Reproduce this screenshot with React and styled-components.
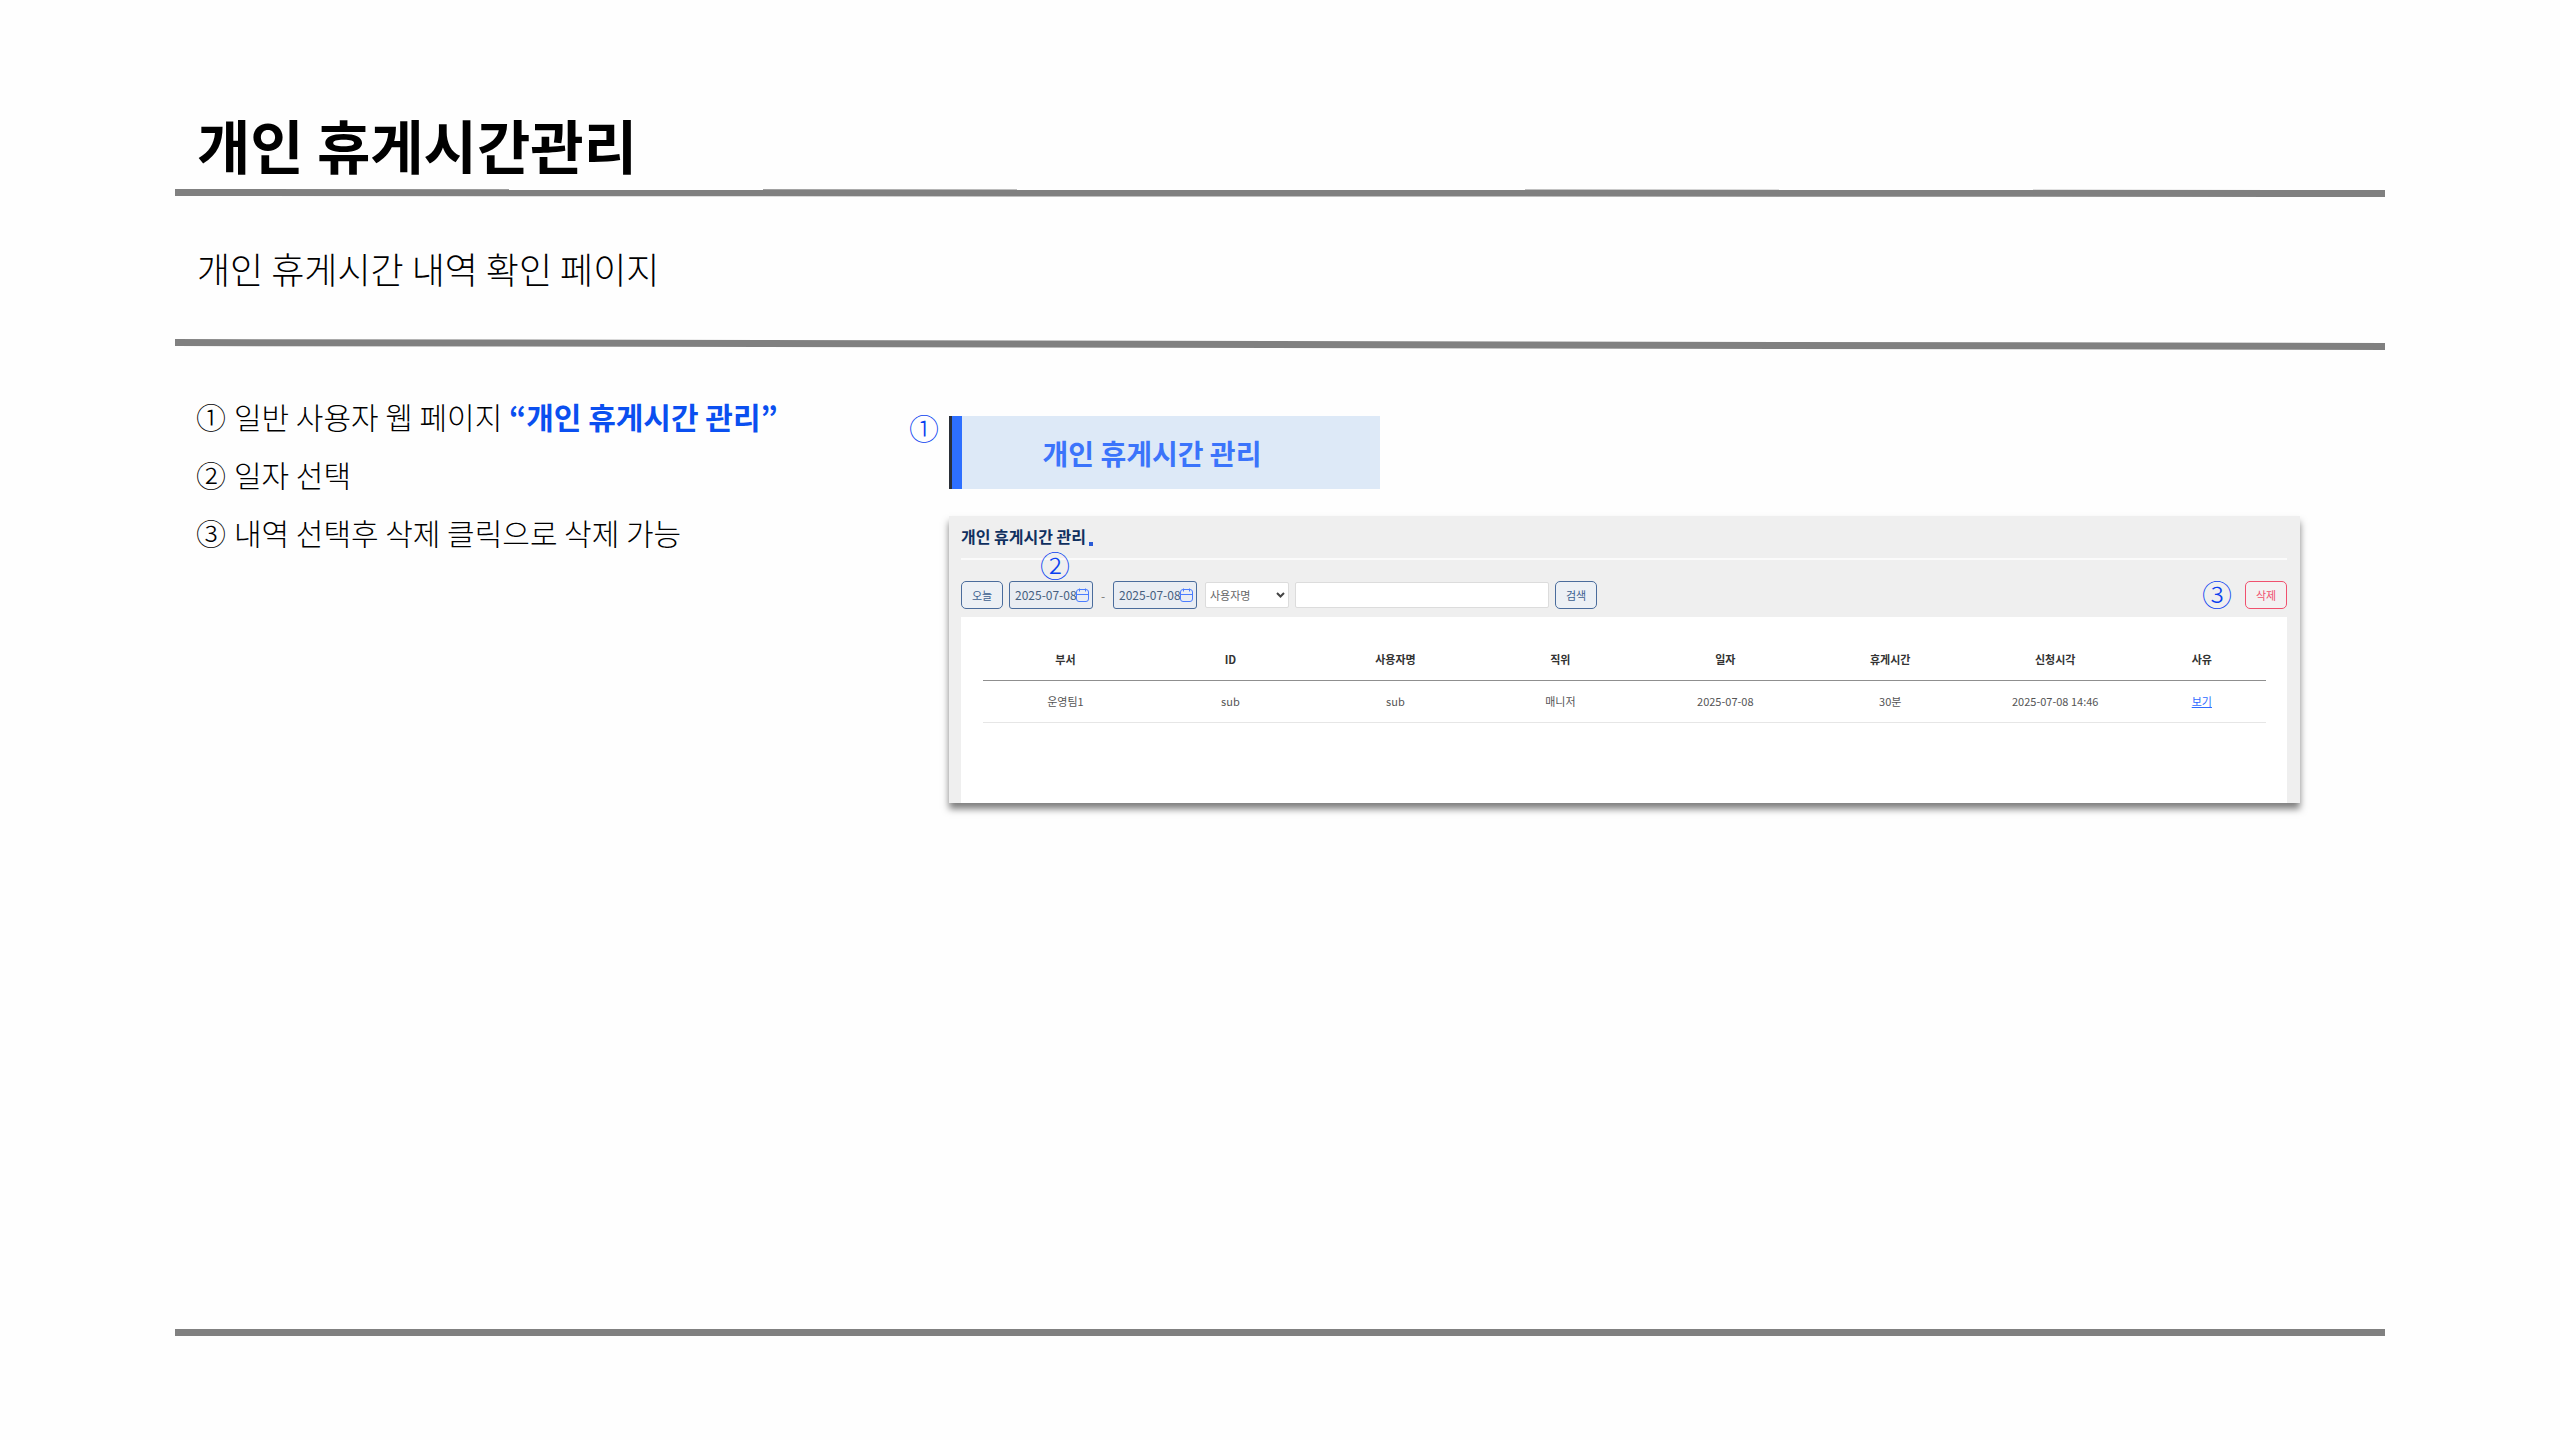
import { useState } from 'react';
import styled, { createGlobalStyle } from 'styled-components';

const GlobalStyle = createGlobalStyle`
  * {
    box-sizing: border-box;
  }
  body {
    margin: 0;
    background-color: #fefefe;
    color: #000;
    font-family: "Noto Sans CJK KR", "Noto Sans", sans-serif;
  }
  button, input, select {
    font-family: inherit;
  }
`

const Page = styled.main`
  display: flex;
  flex-direction: column;
  min-height: 100vh;
  padding: 112px 175px 104px;
`

const Title = styled.h1`
  margin: 0;
  padding: 0 22px;
  height: 77px;
  font-size: 58px;
  line-height: 64px;
  font-weight: 700;
`

/* Thick divider, the drop is how far it sinks towards the right */
const Rule = styled.hr`
  flex: none;
  width: 100%;
  height: ${({ $drop = 0 }) => 7 + $drop}px;
  margin: 0;
  border: 0;
  background-color: #808080;
  clip-path: polygon(
    0 0,
    100% ${({ $drop = 0 }) => $drop}px,
    100% 100%,
    0 calc(100% - ${({ $drop = 0 }) => $drop}px)
  );
`

const Summary = styled.p`
  margin: 0;
  padding: 50px 22px;
  height: 142px;
  font-size: 36px;
  line-height: 42px;
  font-weight: 300;
`

const Content = styled.div`
  flex: 1;
  display: grid;
  grid-template-columns: 734px minmax(0, 1fr);
  padding-right: 85px;
`

const Steps = styled.ol`
  list-style: none;
  margin: 0;
  padding: 37px 21px;
`

const Step = styled.li`
  display: flex;
  align-items: center;
  gap: 8px;
  font-size: 30px;
  line-height: 58px;
  font-weight: 300;

  strong {
    font-weight: 700;
    color: #0a4ff0;
  }
`

const Marker = styled.span`
  font-size: 30px;
  line-height: 30px;
  font-weight: 300;
`

const Callout = styled(Marker)`
  padding-bottom: 4px;
  line-height: 22px;
  color: #0a3ff0;
`

const Demo = styled.div`
  display: flex;
  flex-direction: column;
  gap: 27px;
  padding-top: 66px;
`

const MenuRow = styled.div`
  display: flex;
  align-items: flex-start;
  gap: 10px;
`

const MenuItem = styled.a`
  display: flex;
  align-items: center;
  justify-content: center;
  width: 431px;
  height: 73px;
  padding-right: 28px;
  border-left: 3px solid #2a2f38;
  box-shadow: inset 10px 0 0 #2d6fff;
  background-color: #dde9f7;
  color: #3b74fb;
  font-size: 28px;
  font-weight: 700;
  text-decoration: none;
`

const Card = styled.section`
  margin-left: 40px;
  height: 287px;
  padding: 0 13px 0 12px;
  display: flex;
  flex-direction: column;
  background-color: #efefef;
  box-shadow: 0 6px 7px rgba(0, 0, 0, 0.5);
`

const CardTitle = styled.h2`
  display: flex;
  align-items: flex-end;
  gap: 3px;
  margin: 0;
  height: 44px;
  padding-bottom: 12px;
  border-bottom: 2px solid #fbfbfb;
  color: #10305f;
  font-size: 16px;
  line-height: 20px;
  font-weight: 700;

  &::after {
    content: "";
    width: 4px;
    height: 4px;
    background-color: #2a5bd7;
  }
`

const Toolbar = styled.form`
  display: flex;
  align-items: center;
  gap: 6px;
  height: 57px;
  padding: 21px 0 8px;
`

const Button = styled.button`
  width: 42px;
  height: 28px;
  padding: 0;
  border: 1px solid ${({ $danger }) => $danger ? "#f0506e" : "#4a6c9c"};
  border-radius: 5px;
  background-color: ${({ $danger }) => $danger ? "#f3f1f2" : "#ecf0f5"};
  color: ${({ $danger }) => $danger ? "#f0506e" : "#3d5f8f"};
  font-size: 11px;
  line-height: 16px;
`

const DateField = styled.label`
  display: flex;
  align-items: center;
  width: 84px;
  height: 28px;
  padding: 0 3px 0 5px;
  border: 1px solid #4a6c9c;
  border-radius: 3px;
  background-color: #e9edf3;

  input {
    flex: 1;
    min-width: 0;
    padding: 0 0 2px;
    border: 0;
    outline: 0;
    background: none;
    color: #46607f;
    font-size: 12px;
  }
  svg {
    flex: none;
  }
`

const Dash = styled.span`
  width: 8px;
  text-align: center;
  font-size: 12px;
  color: #777;
`

const SelectBox = styled.div`
  display: flex;
  align-items: center;
  width: 84px;
  height: 26px;
  margin-left: 2px;
  padding-right: 3px;
  border: 1px solid #dcdcdc;
  border-radius: 2px;
  background-color: #fff;

  select {
    flex: 1;
    min-width: 0;
    padding: 0 0 0 4px;
    border: 0;
    outline: 0;
    appearance: none;
    background: none;
    color: #666;
    font-size: 11px;
  }
`

const SearchInput = styled.input`
  width: 254px;
  height: 26px;
  padding: 0 6px;
  border: 1px solid #dcdcdc;
  border-radius: 2px;
  background-color: #fff;
  font-size: 11px;
`

const DeleteGroup = styled.div`
  display: flex;
  align-items: center;
  gap: 13px;
  margin-left: auto;
`

/* Keeps the number above the first date field, over the title line */
const MarkedField = styled.div`
  position: relative;

  ${Callout} {
    position: absolute;
    left: 31px;
    bottom: 30px;
  }
`

const TablePanel = styled.div`
  flex: 1;
  padding: 21px 21px 0 22px;
  background-color: #fff;
`

const Table = styled.table`
  width: 100%;
  table-layout: fixed;
  border-collapse: collapse;
  font-size: 11px;
  line-height: 16px;
  text-align: center;

  th {
    height: 42px;
    padding: 0;
    border-bottom: 1px solid #8f8f8f;
    color: #333;
    font-weight: 700;
  }
  th:last-child {
    width: 10%;
  }
  td {
    height: 42px;
    padding: 0;
    border-bottom: 1px solid #e6e6e6;
    color: #555;
  }
  a {
    color: #2f6bff;
  }
`

const CalendarIcon = () => (
  <svg width="13" height="14" viewBox="0 0 13 14" fill="none" stroke="#4b7dff" strokeWidth="1">
    <rect x="0.5" y="1.5" width="12" height="12" rx="2.5" />
    <path d="M0.5 6.5h12M3.5 0.5v3M9.5 0.5v3" />
  </svg>
)

const Chevron = () => (
  <svg width="9" height="6" viewBox="0 0 9 6" fill="none" stroke="#444" strokeWidth="2">
    <path d="M1 1l3.5 3.5L8 1" />
  </svg>
)

const columns = ["부서", "ID", "사용자명", "직위", "일자", "휴게시간", "신청시각", "사유"]

const rows = [
  ["운영팀1", "sub", "sub", "매니저", "2025-07-08", "30분", "2025-07-08 14:46"],
]

export default function App() {
  const [from, setFrom] = useState("2025-07-08")
  const [to, setTo] = useState("2025-07-08")
  const [keyword, setKeyword] = useState("")

  return (
    <>
      <GlobalStyle />
      <Page>
        <Title>개인 휴게시간관리</Title>
        <Rule $drop={1} />
        <Summary>개인 휴게시간 내역 확인 페이지</Summary>
        <Rule $drop={4} />

        <Content>
          <Steps>
            <Step>
              <Marker>①</Marker>
              <span>일반 사용자 웹 페이지 <strong>“개인 휴게시간 관리”</strong></span>
            </Step>
            <Step>
              <Marker>②</Marker>
              <span>일자 선택</span>
            </Step>
            <Step>
              <Marker>③</Marker>
              <span>내역 선택후 삭제 클릭으로 삭제 가능</span>
            </Step>
          </Steps>

          <Demo>
            <MenuRow>
              <Callout>①</Callout>
              <MenuItem href="#break">개인 휴게시간 관리</MenuItem>
            </MenuRow>

            <Card id="break">
              <CardTitle>개인 휴게시간 관리</CardTitle>
              <Toolbar onSubmit={(e) => e.preventDefault()}>
                <Button type="button">오늘</Button>
                <MarkedField>
                  <Callout>②</Callout>
                  <DateField>
                    <input aria-label="시작일" value={from} onChange={(e) => setFrom(e.target.value)} />
                    <CalendarIcon />
                  </DateField>
                </MarkedField>
                <Dash>-</Dash>
                <DateField>
                  <input aria-label="종료일" value={to} onChange={(e) => setTo(e.target.value)} />
                  <CalendarIcon />
                </DateField>
                <SelectBox>
                  <select aria-label="검색 조건">
                    <option>사용자명</option>
                  </select>
                  <Chevron />
                </SelectBox>
                <SearchInput aria-label="검색어" value={keyword} onChange={(e) => setKeyword(e.target.value)} />
                <Button type="submit">검색</Button>
                <DeleteGroup>
                  <Callout>③</Callout>
                  <Button type="button" $danger>삭제</Button>
                </DeleteGroup>
              </Toolbar>

              <TablePanel>
                <Table>
                  <thead>
                    <tr>
                      {columns.map((name) => <th key={name} scope="col">{name}</th>)}
                    </tr>
                  </thead>
                  <tbody>
                    {
                      rows.map((row, id) => (
                        <tr key={id}>
                          {row.map((cell, i) => <td key={i}>{cell}</td>)}
                          <td><a href="#reason">보기</a></td>
                        </tr>
                      ))
                    }
                  </tbody>
                </Table>
              </TablePanel>
            </Card>
          </Demo>
        </Content>

        <Rule />
      </Page>
    </>
  )
}
